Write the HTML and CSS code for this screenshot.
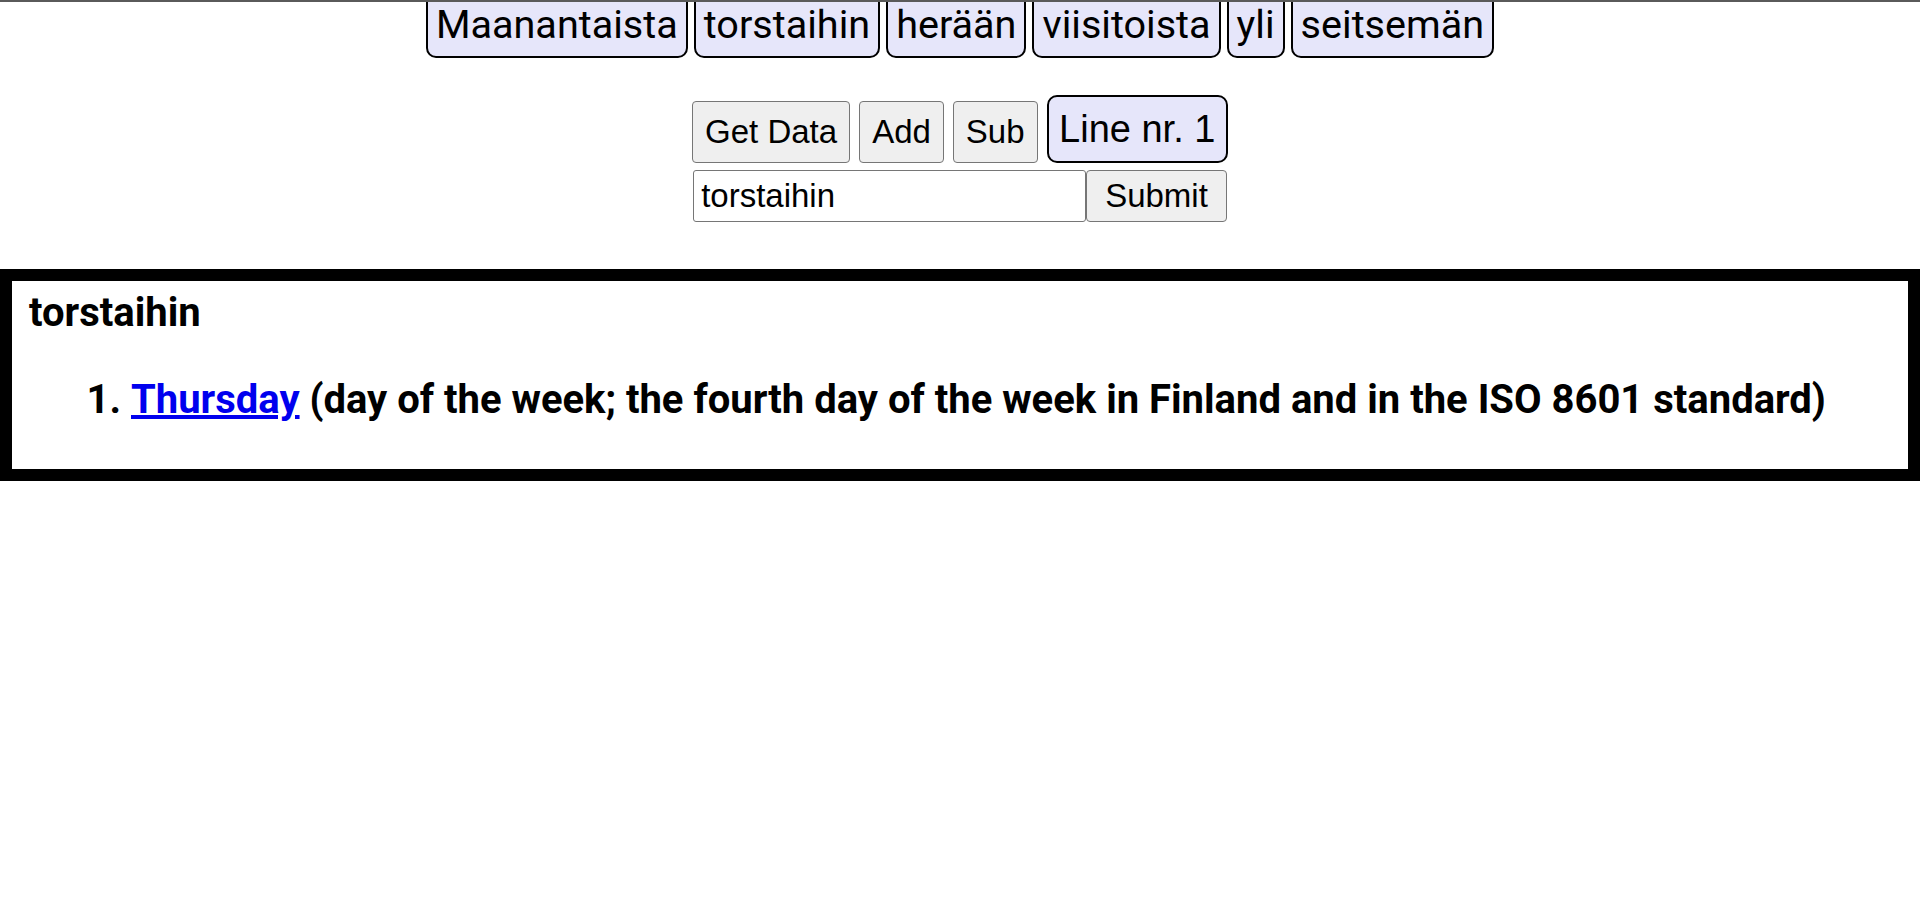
FILE: index.html
```html
<!DOCTYPE html>
<html lang="fi">
<head>
<meta charset="utf-8">
<title>Sanat</title>
<link rel="stylesheet" href="styles.css">
</head>
<body>
<div class="topline"></div>
<div class="words">
  <span class="word">Maanantaista</span>
  <span class="word">torstaihin</span>
  <span class="word">herään</span>
  <span class="word">viisitoista</span>
  <span class="word">yli</span>
  <span class="word">seitsemän</span>
</div>
<div class="controls">
  <button class="ctl" type="button">Get Data</button>
  <button class="ctl" type="button">Add</button>
  <button class="ctl" type="button">Sub</button>
  <span class="line-nr">Line nr. 1</span>
</div>
<form class="search">
  <input class="query" type="text" value="torstaihin">
  <button class="submit" type="button">Submit</button>
</form>
<div class="result">
  <h2 class="result-title">torstaihin</h2>
  <ol class="defs">
    <li><a href="#">Thursday</a> (day of the week; the fourth day of the week in Finland and in the ISO 8601 standard)</li>
  </ol>
</div>
</body>
</html>
```
FILE: styles.css
```css
html, body {
  margin: 0;
  padding: 0;
  background: #fff;
}
body {
  font-family: Roboto, "Noto Sans", sans-serif;
  color: #000;
}
.topline {
  position: fixed;
  top: 0;
  left: 0;
  right: 0;
  height: 2px;
  background: #5a5a5a;
  z-index: 5;
}
.words {
  display: flex;
  justify-content: center;
  gap: 6px;
  margin-top: -9px;
}
.word {
  font-family: Roboto, sans-serif;
  font-size: 39.6px;
  line-height: 47px;
  background: #e6e6fa;
  border: 2px solid #000;
  border-radius: 10px;
  padding: 8px 8px;
}
.controls {
  display: flex;
  justify-content: center;
  align-items: flex-end;
  gap: 9px;
  margin-top: 37px;
}
.ctl,
.submit {
  font-family: "Liberation Sans", Arial, sans-serif;
  font-size: 33px;
  color: #000;
  background: #efefef;
  border: 1px solid #767676;
  border-radius: 4px;
}
.ctl {
  padding: 11px 12px;
}
.line-nr {
  font-family: "Liberation Sans", Arial, sans-serif;
  font-size: 38px;
  background: #e6e6fa;
  border: 2px solid #000;
  border-radius: 10px;
  padding: 10.5px 10.5px;
}
.search {
  display: flex;
  justify-content: center;
  margin: 7px 0 0;
}
.query {
  box-sizing: border-box;
  width: 393px;
  font-family: "Liberation Sans", Arial, sans-serif;
  font-size: 33px;
  color: #000;
  background: #fff;
  border: 1px solid #767676;
  border-radius: 3px;
  padding: 6px 7px;
}
.submit {
  padding: 6px 18px;
}
.result {
  margin-top: 47px;
  border: 12px solid #000;
  padding: 0 17px;
}
.result-title {
  font-family: Roboto, sans-serif;
  font-weight: 700;
  font-size: 40px;
  line-height: 47px;
  margin: 8px 0 0;
}
.defs {
  font-family: Roboto, sans-serif;
  font-weight: 700;
  font-size: 40px;
  line-height: 47px;
  margin: 40px 0 46px;
  padding-left: 102px;
}
.defs a {
  color: #0000ee;
}
```
